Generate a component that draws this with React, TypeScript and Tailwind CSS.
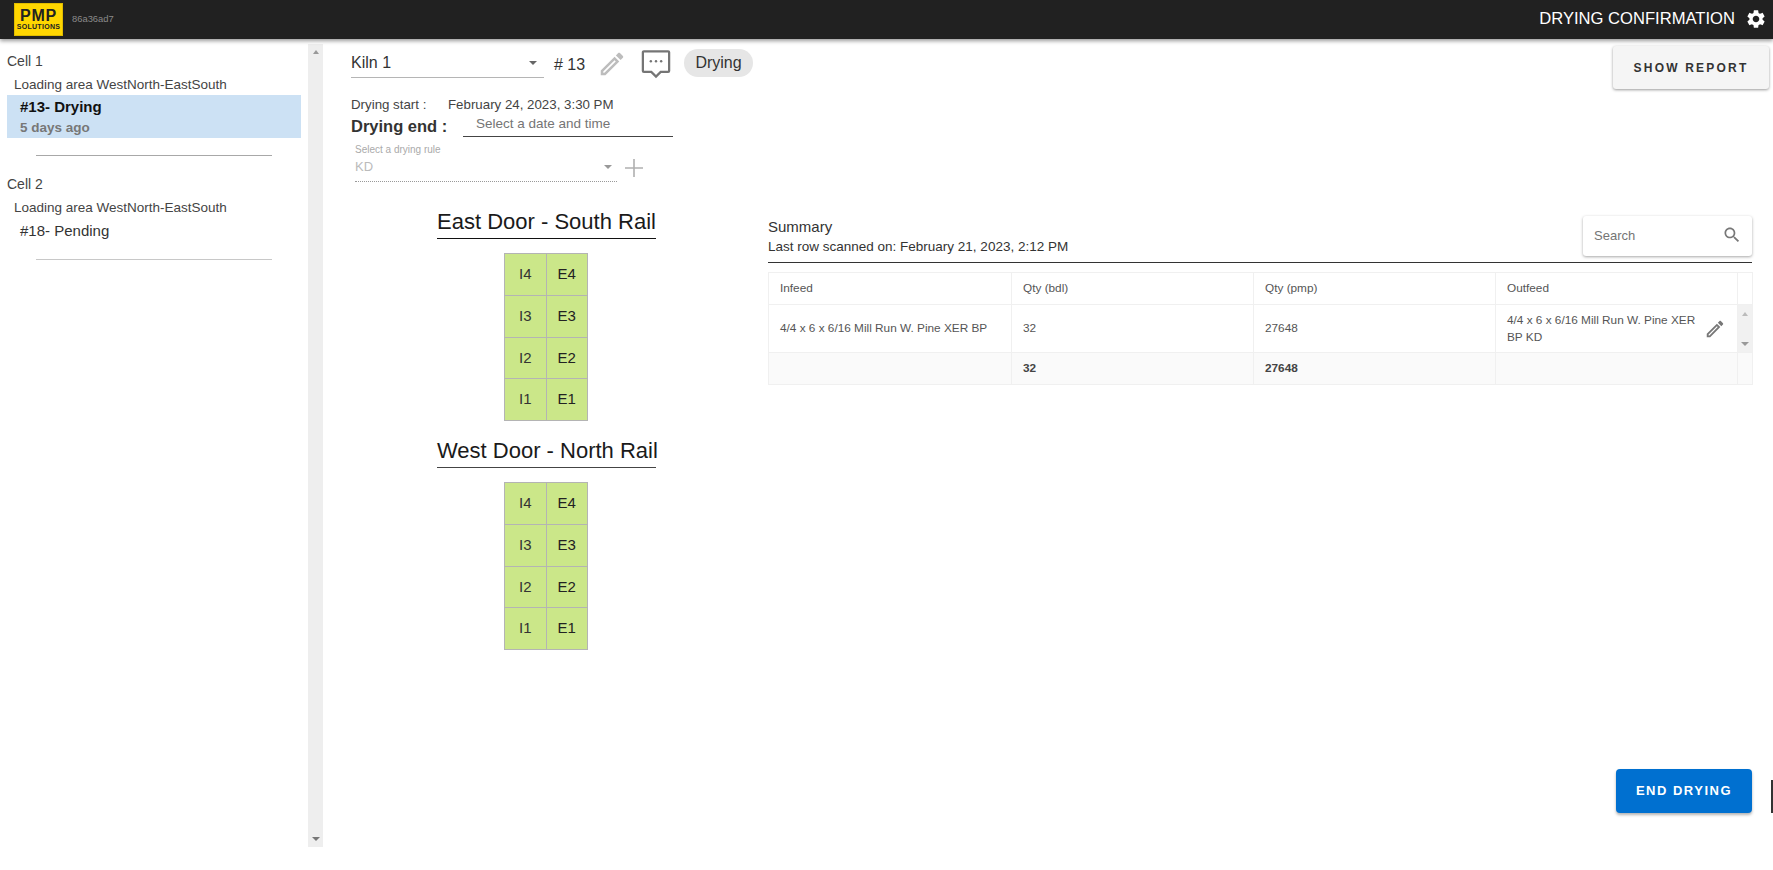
import React from "react";

const font = "font-['Liberation_Sans',Arial,sans-serif]";

const PENCIL =
  "M14.06 9.02l.92.92L5.92 19H5v-.92l9.06-9.06M17.66 3c-.25 0-.51.1-.7.29l-1.83 1.83 3.75 3.75 1.83-1.83c.39-.39.39-1.02 0-1.41l-2.34-2.34c-.2-.2-.45-.29-.71-.29zm-3.6 3.19L3 17.25V21h3.75L17.81 9.94l-3.75-3.75z";
const GEAR =
  "M19.14 12.94c.04-.3.06-.61.06-.94 0-.32-.02-.64-.07-.94l2.03-1.58c.18-.14.23-.41.12-.61l-1.92-3.32c-.12-.22-.37-.29-.59-.22l-2.39.96c-.5-.38-1.03-.7-1.62-.94l-.36-2.54c-.04-.24-.24-.41-.48-.41h-3.84c-.24 0-.43.17-.47.41l-.36 2.54c-.59.24-1.13.57-1.62.94l-2.39-.96c-.22-.08-.47 0-.59.22L2.74 8.87c-.12.21-.08.47.12.61l2.03 1.58c-.05.3-.09.63-.09.94s.02.64.07.94l-2.03 1.58c-.18.14-.23.41-.12.61l1.92 3.32c.12.22.37.29.59.22l2.39-.96c.5.38 1.03.7 1.62.94l.36 2.54c.05.24.24.41.48.41h3.84c.24 0 .44-.17.47-.41l.36-2.54c.59-.24 1.13-.56 1.62-.94l2.39.96c.22.08.47 0 .59-.22l1.92-3.32c.12-.22.07-.47-.12-.61l-2.01-1.58zM12 15.6c-1.98 0-3.6-1.62-3.6-3.6s1.62-3.6 3.6-3.6 3.6 1.62 3.6 3.6-1.62 3.6-3.6 3.6z";
const SEARCH =
  "M15.5 14h-.79l-.28-.27C15.41 12.59 16 11.11 16 9.5 16 5.91 13.09 3 9.5 3S3 5.91 3 9.5 5.91 16 9.5 16c1.61 0 3.09-.59 4.23-1.57l.27.28v.79l5 4.99L20.49 19l-4.99-5zm-6 0C7.01 14 5 11.99 5 9.5S7.01 5 9.5 5 14 7.01 14 9.5 11.99 14 9.5 14z";

const Caret = ({ className }: { className: string }) => (
  <span className={`w-0 h-0 border-x-[4px] border-x-transparent border-t-[4px] ${className}`} />
);

const Door = ({ title, lineClass }: { title: string; lineClass: string }) => (
  <div className="flex flex-col w-[219px]">
    <div className={`w-full h-[29px] text-center text-[22px] leading-[23px] whitespace-nowrap text-[#1a1a1a] border-b ${lineClass}`}>
      {title}
    </div>
    <div className="mt-[14px] ml-[67px] grid grid-cols-2 grid-rows-4 w-[84px] h-[168px] border border-[#b4b4b4] bg-[#b4b4b4] gap-px">
      {["4", "3", "2", "1"].map((n) => (
        <React.Fragment key={n}>
          <div className="bg-[#cbe789] flex items-center justify-center text-[15px] text-[#333]">I{n}</div>
          <div className="bg-[#cbe789] flex items-center justify-center text-[15px] text-[#222]">E{n}</div>
        </React.Fragment>
      ))}
    </div>
  </div>
);

const Sidebar = () => (
  <aside className="w-[308px] shrink-0 pl-[7px] pt-[13px] text-[#333]">
    <div className="text-[14px] leading-[18px] text-[#444]">Cell 1</div>
    <div className="pl-[7px] mt-[6px] text-[13.5px] leading-[18px] text-[#444]">Loading area WestNorth-EastSouth</div>
    <div className="mt-[1px] w-[294px] h-[43px] bg-[#cce1f4] pl-[13px] pt-[2px] font-bold">
      <div className="text-[15px] leading-[20px] text-[#111]">#13- Drying</div>
      <div className="mt-[1px] text-[13.5px] leading-[20px] text-[#777]">5 days ago</div>
    </div>
    <div className="ml-[29px] mt-[17px] w-[236px] h-px bg-[#a8a8a8]" />
    <div className="mt-[19px] text-[14px] leading-[18px] text-[#444]">Cell 2</div>
    <div className="pl-[7px] mt-[6px] text-[13.5px] leading-[18px] text-[#444]">Loading area WestNorth-EastSouth</div>
    <div className="pl-[13px] mt-[4px] text-[15px] leading-[20px] text-[#333]">#18- Pending</div>
    <div className="ml-[29px] mt-[18px] w-[236px] h-px bg-[#c8c8c8]" />
  </aside>
);

const Scrollbar = () => (
  <div className="w-[15px] shrink-0 mt-[5px] h-[803px] bg-[#eeeeee] flex flex-col items-center justify-between py-[6px]">
    <span className="w-0 h-0 border-x-[3.5px] border-x-transparent border-b-[4px] border-b-[#999]" />
    <Caret className="border-t-[#777]" />
  </div>
);

const KilnForm = () => (
  <div className="pl-[28px] pt-[5px] w-[600px]">
    <div className="flex items-start h-[38px]">
      <div className="w-[193px] h-[34px] shrink-0 border-b border-[#b5b5b5] flex items-center justify-between pt-[4px] pr-[7px] text-[16px] text-[#333]">
        Kiln 1
        <Caret className="border-t-[#666]" />
      </div>
      <span className="ml-[10px] w-[34px] mt-[11px] text-[16px] leading-[20px] text-[#333] whitespace-nowrap"># 13</span>
      <svg viewBox="0 0 24 24" className="w-[30px] h-[30px] shrink-0 ml-[9px] mt-[5px] fill-[#bdbdbd]">
        <path d={PENCIL} />
      </svg>
      <svg viewBox="0 0 32 32" fill="none" className="w-[30px] h-[30px] shrink-0 ml-[14px] mt-[5px]">
        <path d="M3 2.5h26a1 1 0 0 1 1 1v20a1 1 0 0 1-1 1H21l-5 5-5-5H3a1 1 0 0 1-1-1v-20a1 1 0 0 1 1-1z" stroke="#757575" strokeWidth="2.4" />
        <circle cx="10.5" cy="13" r="1.3" fill="#757575" />
        <circle cx="16" cy="13" r="1.3" fill="#757575" />
        <circle cx="21.5" cy="13" r="1.3" fill="#757575" />
      </svg>
      <span className="ml-[13px] mt-[5px] h-[28px] w-[69px] shrink-0 rounded-full bg-[#e6e6e6] flex items-center justify-center text-[16px] text-[#333]">
        Drying
      </span>
    </div>
    <div className="mt-[14px] flex text-[13.3px] leading-[18px] text-[#444] whitespace-nowrap">
      <span className="w-[97px]">Drying start :</span>
      <span>February 24, 2023, 3:30 PM</span>
    </div>
    <div className="flex items-end h-[24px] -mt-[1px]">
      <span className="w-[112px] text-[16.5px] leading-[22px] font-bold text-[#333] whitespace-nowrap">Drying end :</span>
      <div className="w-[210px] h-[24px] border-b border-[#444] pl-[13px] pt-[2px] text-[13.5px] leading-[18px] text-[#757575]">
        Select a date and time
      </div>
    </div>
    <div className="flex items-end mt-[6px] ml-[4px]">
      <div className="w-[262px] h-[39px] border-b border-dotted border-[#999]">
        <div className="text-[10px] leading-[13px] text-[#aaa]">Select a drying rule</div>
        <div className="flex items-center justify-between pr-[5px] h-[22px] text-[13px] text-[#bbb]">
          KD
          <Caret className="border-t-[#999]" />
        </div>
      </div>
      <svg viewBox="0 0 18 18" className="w-[18px] h-[18px] ml-[8px] mb-[5px] fill-[#b0b0b0]">
        <path d="M8.2 0h1.6v8.2H18v1.6H9.8V18H8.2V9.8H0V8.2h8.2z" />
      </svg>
    </div>
  </div>
);

const Summary = () => (
  <div className="w-[984px] flex flex-col h-[597px]">
    <div className="h-[47px] flex justify-between border-b border-[#333]">
      <div className="pt-[2px]">
        <div className="text-[15px] leading-[18px] text-[#333]">Summary</div>
        <div className="mt-[2px] text-[13.5px] leading-[18px] text-[#333]">Last row scanned on: February 21, 2023, 2:12 PM</div>
      </div>
      <div className="w-[169px] h-[40px] rounded-[3px] bg-white shadow-[0_1px_3px_rgba(0,0,0,0.35)] flex items-center justify-between pl-[11px] pr-[10px]">
        <span className="text-[13px] text-[#757575]">Search</span>
        <svg viewBox="0 0 24 24" className="w-[20px] h-[20px] fill-[#777] -mt-[3px]">
          <path d={SEARCH} />
        </svg>
      </div>
    </div>
    <table className="mt-[9px] w-[984px] table-fixed border-collapse text-[11.8px] leading-[17px] text-[#555]">
      <colgroup>
        <col className="w-[243px]" />
        <col className="w-[242px]" />
        <col className="w-[242px]" />
        <col className="w-[242px]" />
        <col className="w-[15px]" />
      </colgroup>
      <tbody>
        <tr className="h-[32px]">
          {["Infeed", "Qty (bdl)", "Qty (pmp)", "Outfeed"].map((h) => (
            <td key={h} className="border border-[#f0f0f0] pl-[11px] font-normal">{h}</td>
          ))}
          <td className="border border-[#f0f0f0]" />
        </tr>
        <tr className="h-[48px]">
          <td className="border border-[#f0f0f0] pl-[11px]">4/4 x 6 x 6/16 Mill Run W. Pine XER BP</td>
          <td className="border border-[#f0f0f0] pl-[11px]">32</td>
          <td className="border border-[#f0f0f0] pl-[11px]">27648</td>
          <td className="border border-[#f0f0f0] pl-[11px] pr-[11px]">
            <div className="flex items-center justify-between">
              <span className="w-[195px]">4/4 x 6 x 6/16 Mill Run W. Pine XER BP KD</span>
              <svg viewBox="0 0 24 24" className="w-[22px] h-[22px] fill-[#777]">
                <path d={PENCIL} />
              </svg>
            </div>
          </td>
          <td className="border border-[#f0f0f0] bg-[#f1f1f1] p-0">
            <div className="h-[46px] flex flex-col items-center justify-between py-[6px]">
              <span className="w-0 h-0 border-x-[3.5px] border-x-transparent border-b-[4px] border-b-[#bbb]" />
              <Caret className="border-t-[#999]" />
            </div>
          </td>
        </tr>
        <tr className="h-[32px] bg-[#fafafa] font-bold text-[#444]">
          <td className="border border-[#f0f0f0]" />
          <td className="border border-[#f0f0f0] pl-[11px]">32</td>
          <td className="border border-[#f0f0f0] pl-[11px]">27648</td>
          <td className="border border-[#f0f0f0]" />
          <td className="border border-[#f0f0f0]" />
        </tr>
      </tbody>
    </table>
    <button className="mt-auto self-end w-[136px] h-[44px] rounded-[4px] bg-[#0070d0] text-white text-[13px] font-bold tracking-[1.5px] shadow-[0_2px_3px_rgba(0,0,0,0.3)]">
      END DRYING
    </button>
  </div>
);

export default function App() {
  return (
    <div className={`relative w-full h-[870px] overflow-hidden bg-white ${font}`}>
      <header className="relative z-10 h-[39px] bg-[#212121] shadow-[0_2px_4px_rgba(0,0,0,0.4)] flex items-center justify-between pl-[14px] pr-[6px]">
        <div className="flex items-center">
          <div className="w-[49px] h-[33px] bg-[#ffd600] border border-[#e0bc00] flex flex-col items-center justify-center text-[#222] font-bold">
            <span className="text-[16px] leading-[15px] tracking-[0.8px]">PMP</span>
            <span className="text-[7px] leading-[8px] tracking-[0.3px]">SOLUTIONS</span>
          </div>
          <span className="ml-[9px] text-[9.4px] text-[#8a8a8a]">86a36ad7</span>
        </div>
        <div className="flex items-center text-white">
          <span className="text-[16.6px]">DRYING CONFIRMATION</span>
          <svg viewBox="0 0 24 24" className="w-[22px] h-[22px] ml-[10px] fill-white">
            <path d={GEAR} />
          </svg>
        </div>
      </header>
      <div className="flex h-[831px]">
        <Sidebar />
        <Scrollbar />
        <main className="flex-1 flex flex-col min-w-0">
          <div className="flex justify-between items-start">
            <KilnForm />
            <button className="mt-[7px] mr-[4px] w-[156px] h-[43px] rounded-[3px] bg-[#f5f5f5] text-[12px] font-bold tracking-[2.2px] text-[#333] shadow-[0_1px_3px_rgba(0,0,0,0.4)]">
              SHOW REPORT
            </button>
          </div>
          <div className="flex mt-[28px]">
            <div className="pl-[114px] w-[445px] flex flex-col gap-[18px]">
              <Door title="East Door - South Rail" lineClass="border-[#111]" />
              <Door title="West Door - North Rail" lineClass="border-[#444]" />
            </div>
            <div className="pt-[6px]">
              <Summary />
            </div>
          </div>
        </main>
      </div>
      <div className="absolute left-[1771px] top-[780px] w-[2px] h-[33px] bg-[#333]" />
    </div>
  );
}
